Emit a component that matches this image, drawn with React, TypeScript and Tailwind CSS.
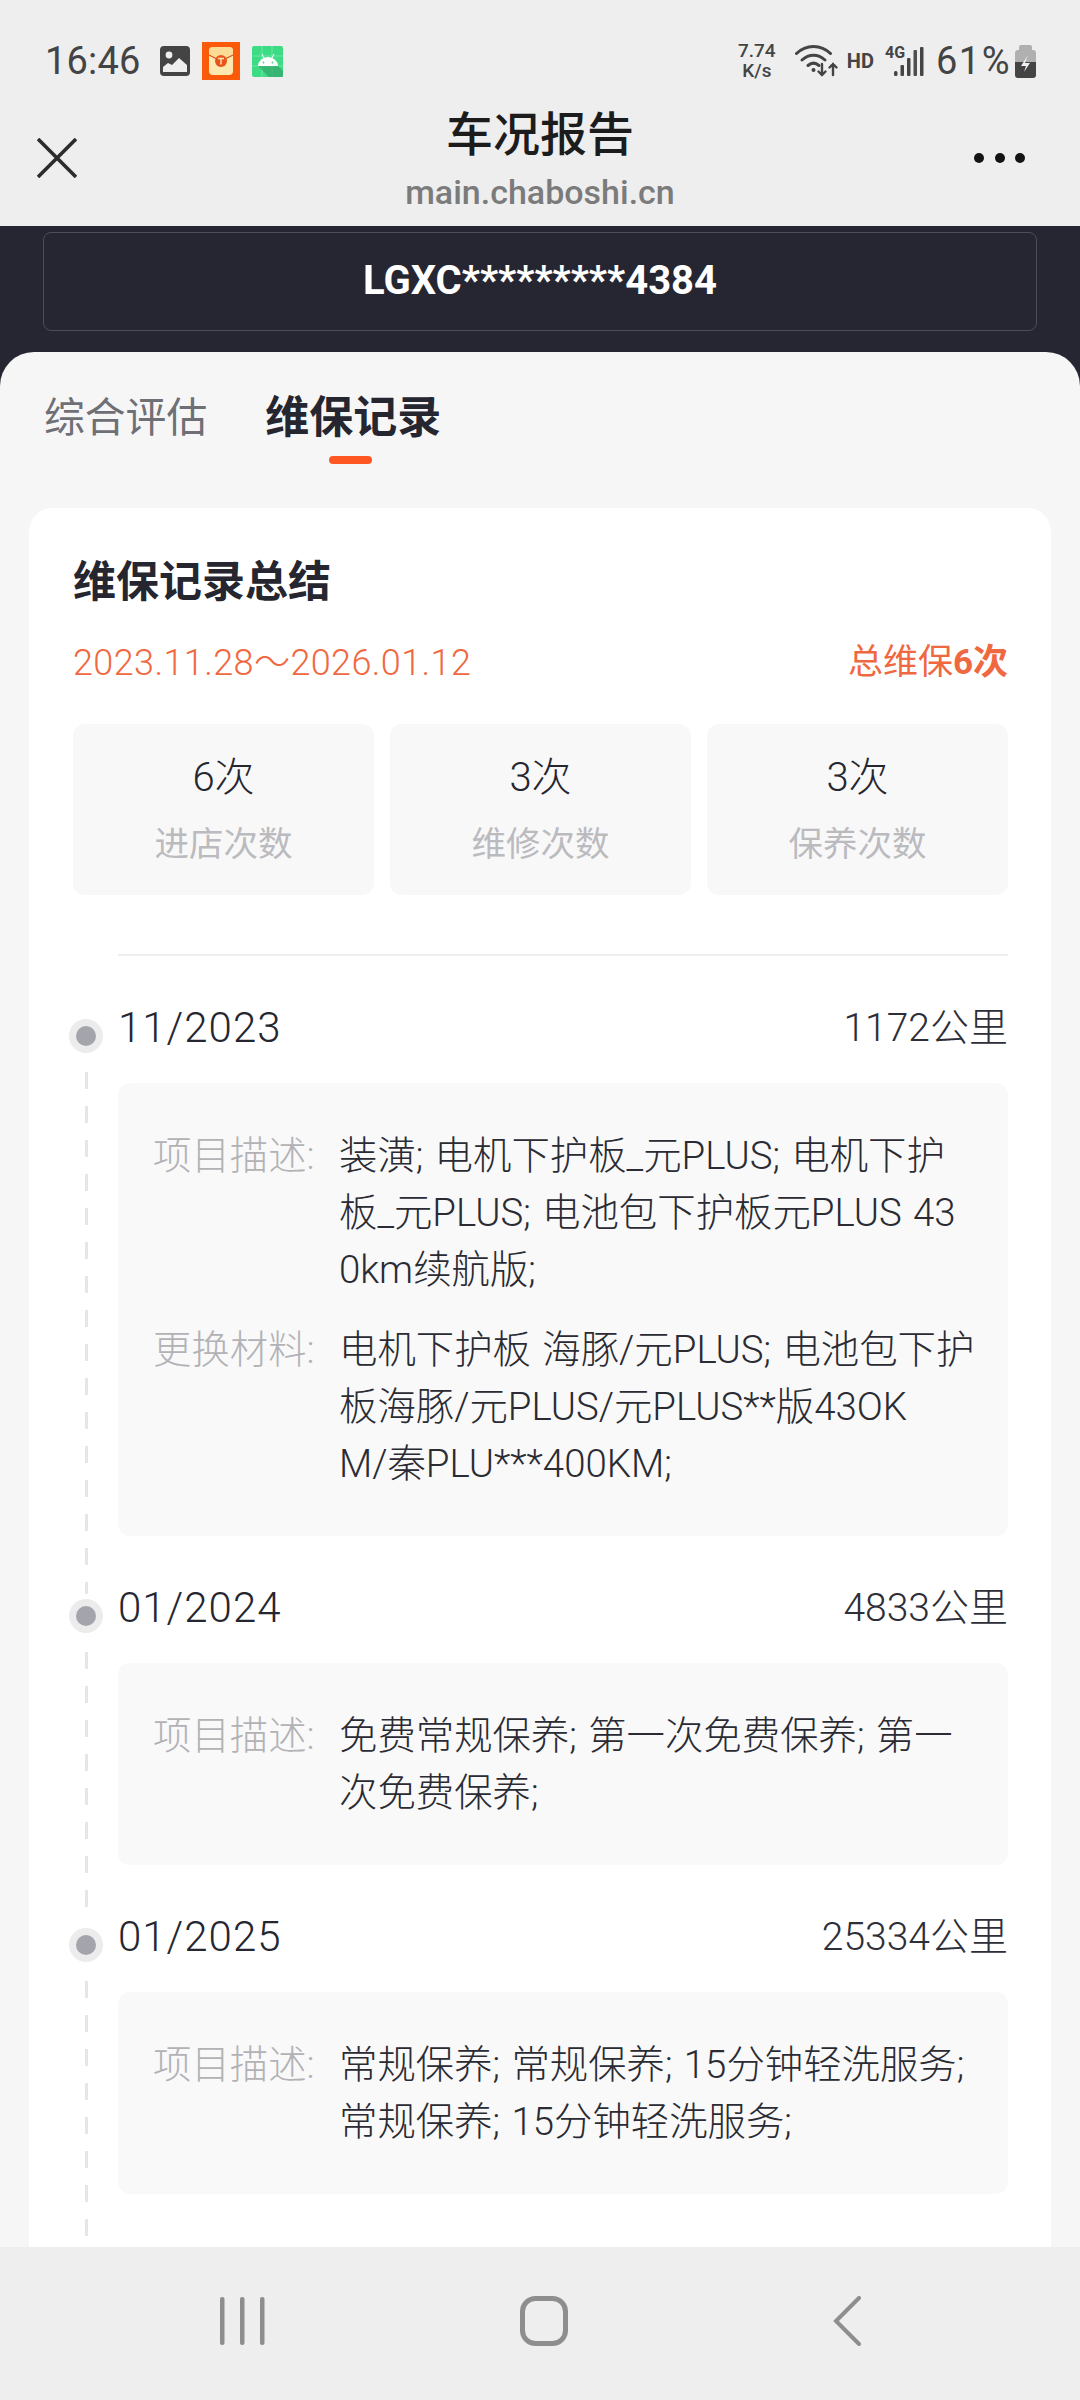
import React from "react";

type Section = { label: string; lines: string[] };
type Entry = { date: string; km: string; sections: Section[] };

const entries: Entry[] = [
  {
    date: "11/2023",
    km: "1172公里",
    sections: [
      { label: "项目描述:", lines: ["装潢; 电机下护板_元PLUS; 电机下护", "板_元PLUS; 电池包下护板元PLUS 43", "0km续航版;"] },
      { label: "更换材料:", lines: ["电机下护板 海豚/元PLUS; 电池包下护", "板海豚/元PLUS/元PLUS**版43OK", "M/秦PLU***400KM;"] },
    ],
  },
  {
    date: "01/2024",
    km: "4833公里",
    sections: [{ label: "项目描述:", lines: ["免费常规保养; 第一次免费保养; 第一", "次免费保养;"] }],
  },
  {
    date: "01/2025",
    km: "25334公里",
    sections: [{ label: "项目描述:", lines: ["常规保养; 常规保养; 15分钟轻洗服务;", "常规保养; 15分钟轻洗服务;"] }],
  },
  {
    date: "04/2025",
    km: "",
    sections: [],
  },
];

const stats = [
  ["6次", "进店次数"],
  ["3次", "维修次数"],
  ["3次", "保养次数"],
];

function StatusLeft() {
  return (
    <div className="flex items-center">
      <span className="text-[38px] leading-[40px] text-[#444] tracking-[0.2px]">16:46</span>
      <svg className="ml-[19px]" width="30" height="30" viewBox="0 0 30 30">
        <rect width="30" height="30" rx="4" fill="#444" />
        <circle cx="9" cy="9" r="3.4" fill="#eee" />
        <path d="M3 26v-5l5-4 4 2 7-7 8 7v7z" fill="#eee" />
      </svg>
      <svg className="ml-[12px]" width="38" height="38" viewBox="0 0 38 38">
        <rect width="38" height="38" fill="#fb5a0a" />
        <rect x="7" y="5" width="24" height="28" rx="4" fill="#fde9b0" />
        <path d="M7 12l12 7 12-7V9a4 4 0 0 0-4-4H11a4 4 0 0 0-4 4z" fill="#fbdc96" />
        <path d="M7 13l12 6 12-6" fill="none" stroke="#d9541c" strokeWidth="1.2" />
        <circle cx="19" cy="19" r="6" fill="#e9541a" />
        <path d="M16 16.5h6M19 16.5v6" stroke="#fde9b0" strokeWidth="1.4" />
      </svg>
      <svg className="ml-[12px]" width="31" height="31" viewBox="0 0 31 31">
        <rect width="31" height="31" rx="2" fill="#3ddc84" />
        <path d="M0 10h31M0 20h31M10 0v31M20 0v31" stroke="#6fe6a6" strokeWidth="1" />
        <path d="M6 20h20L31 25V31H17z" fill="#2e9d66" opacity="0.6" />
        <path d="M6 20a10 9 0 0 1 20 0z" fill="#fff" />
        <path d="M10 8l2 4M22 8l-2 4" stroke="#fff" strokeWidth="1" />
        <circle cx="11.5" cy="16.5" r="0.9" fill="#3ddc84" />
        <circle cx="20.5" cy="16.5" r="0.9" fill="#3ddc84" />
      </svg>
    </div>
  );
}

function StatusRight() {
  return (
    <div className="flex items-center">
      <div className="w-[42px] flex flex-col items-center text-[19px] leading-[20px] text-[#444] font-medium">
        <span>7.74</span>
        <span>K/s</span>
      </div>
      <svg className="ml-[17px]" width="43" height="34" viewBox="0 0 43 34" fill="none" stroke="#444" strokeLinecap="round">
        <path d="M1.5 9.5C11 0 26 0 35.5 9.5" strokeWidth="3" />
        <path d="M7 16c7-6.500 16-6.500 23 0" strokeWidth="3" />
        <path d="M13 21.500c3.500-3 7.500-3 11 0" strokeWidth="3" />
        <circle cx="18.500" cy="26" r="2" fill="#444" stroke="none" />
        <path d="M27 20v11M23.500 27.500L27 31l3.500-3.500" strokeWidth="2.400" />
        <path d="M38 31V20M34.500 23.500L38 20l3.500 3.500" strokeWidth="2.400" />
      </svg>
      <span className="ml-[9px] text-[20px] leading-[20px] font-bold text-[#444]">HD</span>
      <svg className="ml-[11px]" width="39" height="34" viewBox="0 0 39 34">
        <text x="0" y="14" fontSize="16" fontWeight="700" fill="#444" fontFamily="Roboto">4G</text>
        <rect x="9" y="27" width="3.500" height="5" rx="1.500" fill="#444" />
        <rect x="15.500" y="21" width="3.500" height="11" rx="1" fill="#444" />
        <rect x="22" y="14" width="3.500" height="18" rx="1" fill="#444" />
        <rect x="28.500" y="6" width="3.500" height="26" rx="1" fill="#444" opacity="0.95" />
        <rect x="35" y="3" width="3.500" height="29" rx="1" fill="#444" />
      </svg>
      <span className="ml-[12px] text-[38px] leading-[40px] text-[#444] tracking-[1.5px]">61%</span>
      <svg className="ml-[4px]" width="21" height="33" viewBox="0 0 21 33">
        <path d="M6 0h9a2 2 0 0 1 2 2v3h1a3 3 0 0 1 3 3v9H0V8a3 3 0 0 1 3-3h1V2a2 2 0 0 1 2-2z" fill="#b0b0b0" />
        <path d="M0 17h21v13a3 3 0 0 1-3 3H3a3 3 0 0 1-3-3z" fill="#444" />
        <path d="M13 10l-7 11h5l-2 6 6-9h-5z" fill="#eee" />
      </svg>
    </div>
  );
}

function TimelineEntry({ entry, last }: { entry: Entry; last: boolean }) {
  return (
    <div className="relative mb-[44px]">
      {!last && (
        <div className="absolute left-[-33.500px] top-[72px] bottom-[-58px] w-[3px] bg-[repeating-linear-gradient(to_bottom,#e6e6e6_0,#e6e6e6_17px,transparent_17px,transparent_34px)]" />
      )}
      <div className="absolute left-[-49px] top-[19px] w-[34px] h-[34px] rounded-full bg-[#ececec] flex items-center justify-center">
        <div className="w-[20px] h-[20px] rounded-full bg-[#a4a4ac]" />
      </div>
      <div className="h-[56px] flex items-center justify-between text-[#25262f]">
        <span className="text-[42px] leading-[56px] font-light tracking-[1px]">{entry.date}</span>
        <span className="text-[39px] leading-[56px] font-light text-[#2d2e37]">{entry.km}</span>
      </div>
      {entry.sections.length > 0 && (
        <div className="mt-[27px] rounded-[12px] bg-[#f9f9f9] pl-[35px] pr-[33px] pt-[44px] pb-[44px] flex flex-col gap-[23px]">
          {entry.sections.map((s) => (
            <div key={s.label} className="flex text-[38.400px] leading-[57px] font-light [word-spacing:2px]">
              <span className="w-[186px] shrink-0 text-[#b2b2b6]">{s.label}</span>
              <div className="flex-1 whitespace-nowrap text-[#2a2b33]">
                {s.lines.map((line) => (
                  <div key={line}>{line}</div>
                ))}
              </div>
            </div>
          ))}
        </div>
      )}
    </div>
  );
}

export default function App() {
  return (
    <div className="w-[1080px] h-[2400px] flex flex-col overflow-hidden bg-[#252631] font-['Roboto','Noto_Sans_CJK_SC',sans-serif]">
      <header className="h-[226px] shrink-0 bg-[#eeeeee] flex flex-col">
        <div className="h-[42px] shrink-0" />
        <div className="h-[38px] shrink-0 pl-[45px] pr-[44px] flex items-center justify-between">
          <StatusLeft />
          <StatusRight />
        </div>
        <div className="flex-1 px-[37px] grid grid-cols-[1fr_auto_1fr] items-center">
          <svg width="40" height="40" viewBox="0 0 40 40" className="mt-[10px]" stroke="#2c2c2c" strokeWidth="3.600">
            <path d="M1 1l38 38M39 1L1 39" />
          </svg>
          <div className="flex flex-col items-center mt-[12px]">
            <span className="text-[47px] leading-[58px] text-[#1c1c1c] font-medium">车况报告</span>
            <span className="text-[34px] leading-[40px] text-[#7b7b7b] font-medium mt-[8px]">main.chaboshi.cn</span>
          </div>
          <div className="flex justify-end gap-[10.500px] mt-[10px] pr-[18px]">
            <div className="w-[10px] h-[10px] rounded-full bg-[#141414]" />
            <div className="w-[10px] h-[10px] rounded-full bg-[#141414]" />
            <div className="w-[10px] h-[10px] rounded-full bg-[#141414]" />
          </div>
        </div>
      </header>

      <div className="h-[126px] shrink-0 px-[43px] pt-[6px]">
        <div className="h-[99px] rounded-[8px] border border-[#4c4d58] flex items-center justify-center text-white text-[40px] font-bold pb-[2px]">
          LGXC*********4384
        </div>
      </div>

      <main className="flex-1 min-h-0 overflow-hidden rounded-t-[34px] bg-[#f6f6f6] px-[29px]">
        <div className="h-[156px] relative pl-[15px] pt-[38px] flex gap-[58px]">
          <span className="text-[40.800px] leading-[56px] text-[#6f6f76]">综合评估</span>
          <span className="relative text-[44px] leading-[56px] font-bold text-[#25262f]">
            维保记录
            <span className="absolute left-[64px] top-[66px] w-[43px] h-[8px] rounded-full bg-[#ff5722]" />
          </span>
        </div>

        <section className="rounded-t-[24px] bg-white pl-[44px] pr-[43px] pt-[44px]">
          <h2 className="text-[43px] leading-[60px] font-bold text-[#25262f]">维保记录总结</h2>
          <div className="mt-[26px] h-[50px] flex items-center justify-between text-[#f0683f]">
            <span className="text-[36px] font-light tracking-[0.4px]">2023.11.28～2026.01.12</span>
            <span className="text-[35px]">
              总维保<span className="font-bold">6次</span>
            </span>
          </div>
          <div className="mt-[36px] grid grid-cols-3 gap-[16px]">
            {stats.map(([v, l]) => (
              <div key={l} className="h-[171px] rounded-[12px] bg-[#f8f8f8] pt-[26px] flex flex-col items-center">
                <span className="text-[40px] leading-[56px] font-light text-[#25262f]">{v}</span>
                <span className="mt-[13px] text-[34.500px] leading-[50px] text-[#bbbbbf]">{l}</span>
              </div>
            ))}
          </div>
          <div className="mt-[59px] ml-[45px] h-[2px] bg-[#eeeeee]" />
          <div className="ml-[45px] mt-[44px]">
            {entries.map((e, i) => (
              <TimelineEntry key={e.date} entry={e} last={i === entries.length - 1} />
            ))}
          </div>
        </section>
      </main>

      <nav className="h-[153px] shrink-0 bg-[#eeeeee] grid grid-cols-[220px_45px_255px_48px_265px_28px] items-center pb-[6px]">
        <div />
        <svg width="45" height="48" viewBox="0 0 45 48" fill="#8e8e8e">
          <rect x="0" y="0" width="4.500" height="48" rx="2" />
          <rect x="20" y="0" width="4.500" height="48" rx="2" />
          <rect x="40" y="0" width="4.500" height="48" rx="2" />
        </svg>
        <div />
        <svg width="48" height="50" viewBox="0 0 48 50" fill="none" stroke="#8e8e8e" strokeWidth="5">
          <rect x="2.500" y="2.500" width="43" height="45" rx="13" />
        </svg>
        <div />
        <svg width="28" height="50" viewBox="0 0 28 50" fill="none" stroke="#8e8e8e" strokeWidth="4" strokeLinecap="round">
          <path d="M26 2L3 25l23 23" />
        </svg>
      </nav>
    </div>
  );
}
